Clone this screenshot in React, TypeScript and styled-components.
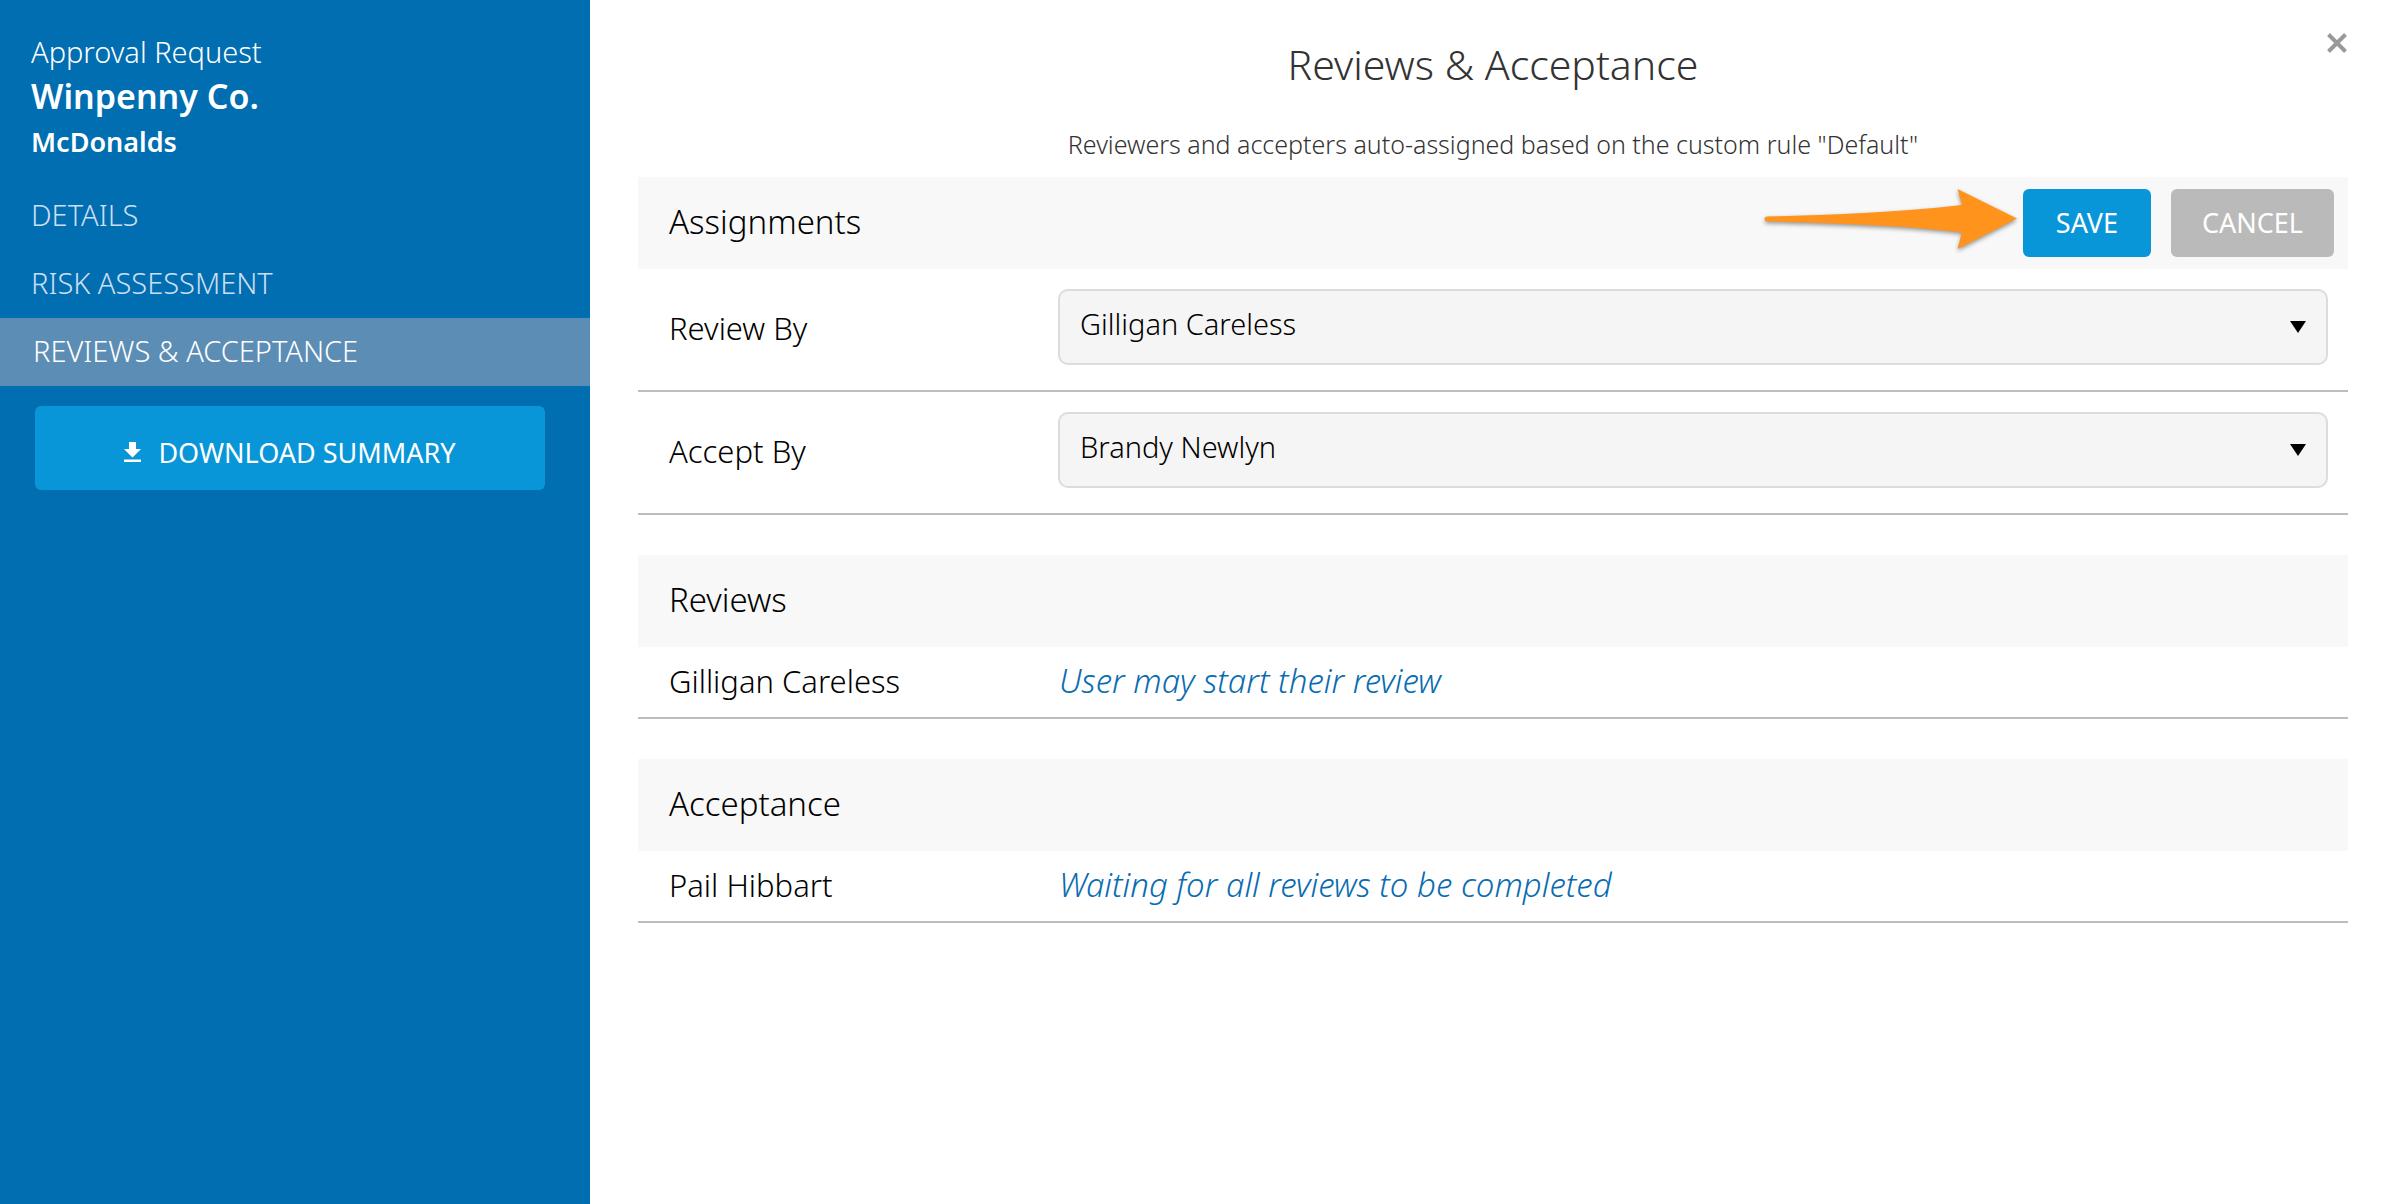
import React, { useState } from "react";
import styled, { createGlobalStyle } from "styled-components";

const GlobalStyle = createGlobalStyle`
  *, *::before, *::after { box-sizing: border-box; }
  body {
    margin: 0;
    background: #ffffff;
    color: #000000;
    font-family: "Noto Sans", "Open Sans", sans-serif;
    font-weight: 300;
  }
  h1, h2, p, dl, dt, dd { margin: 0; font-weight: inherit; }
  button, select { font-family: inherit; }
`;

const Page = styled.div`
  display: flex;
  min-height: 100vh;
`;

const Sidebar = styled.aside`
  flex: 0 0 590px;
  display: flex;
  flex-direction: column;
  background: #006eb1;
  color: #ffffff;
`;

const Request = styled.header`
  padding: 32px 31px 18px;
`;

const RequestKind = styled.p`
  font-size: 29px;
  line-height: 40px;
`;

const Company = styled.p`
  font-size: 34px;
  line-height: 48px;
  font-weight: 600;
`;

const Client = styled.p`
  font-size: 27px;
  line-height: 44px;
  font-weight: 600;
`;

const Nav = styled.nav`
  display: flex;
  flex-direction: column;
`;

const NavLink = styled.a<{ $active?: boolean }>`
  padding: 0 31px 2px;
  padding-left: ${(p) => (p.$active ? 33 : 31)}px;
  font-size: 29px;
  line-height: 66px;
  text-decoration: none;
  text-transform: uppercase;
  color: ${(p) => (p.$active ? "#ffffff" : "#ccdff0")};
  background: ${(p) => (p.$active ? "#5c8db5" : "transparent")};
`;

const Button = styled.button<{ $muted?: boolean }>`
  min-width: 128px;
  height: 68px;
  padding: 0 31px 2px;
  border: 0;
  border-radius: 6px;
  background: ${(p) => (p.$muted ? "#bababa" : "#0996d9")};
  color: #ffffff;
  font-size: 27px;
  font-weight: 400;
  text-transform: uppercase;
  cursor: pointer;
`;

const DownloadButton = styled(Button)`
  display: flex;
  align-items: center;
  justify-content: center;
  gap: 17px;
  height: 84px;
  margin: 20px 45px 0 35px;
  padding: 8px 0 0;
`;

const Main = styled.main`
  position: relative;
  flex: 1;
  min-width: 0;
  padding: 36px 34px 40px 48px;
`;

const CloseButton = styled.button`
  position: absolute;
  top: 29px;
  right: 31px;
  display: flex;
  padding: 4px;
  border: 0;
  background: none;
  cursor: pointer;
`;

const Title = styled.h1`
  font-size: 41px;
  line-height: 56px;
  text-align: center;
  color: #333333;
`;

const Subtitle = styled.p`
  margin: 32px 0 13px;
  font-size: 25px;
  line-height: 40px;
  text-align: center;
  color: #333333;
`;

const Section = styled.section`
  & + & { margin-top: 40px; }
`;

const SectionHeader = styled.div`
  display: flex;
  align-items: center;
  justify-content: space-between;
  height: 92px;
  padding: 0 14px 0 31px;
  background: #f8f8f8;
`;

const SectionTitle = styled.h2`
  padding-bottom: 2px;
  font-size: 33px;
  line-height: 44px;
`;

const Actions = styled.div`
  display: flex;
  align-items: center;
`;

const ButtonGroup = styled.div`
  display: flex;
  gap: 20px;
`;

const FieldRow = styled.div`
  display: grid;
  grid-template-columns: 420px 1fr;
  align-items: center;
  padding: 20px 20px 25px 0;
  border-bottom: 2px solid #bdbdbd;
`;

const FieldLabel = styled.label`
  padding: 2px 0 0 31px;
  font-size: 31px;
  line-height: 44px;
`;

const SelectBox = styled.div`
  display: grid;
  align-items: center;
  justify-items: end;

  & > * { grid-area: 1 / 1; }
  & > svg { margin-right: 22px; pointer-events: none; }
`;

const Select = styled.select`
  appearance: none;
  width: 100%;
  height: 76px;
  padding: 0 60px 8px 20px;
  border: 2px solid #dcdcdc;
  border-radius: 10px;
  background: #f5f5f5;
  color: #000000;
  font-size: 29px;
  font-weight: 300;
`;

const StatusRow = styled.dl`
  display: grid;
  grid-template-columns: 420px 1fr;
  align-items: center;
  height: 72px;
  padding-bottom: 2px;
  border-bottom: 2px solid #bdbdbd;
  font-size: 31px;
  line-height: 44px;
`;

const Person = styled.dt`
  padding-left: 31px;
`;

const Status = styled.dd`
  padding-left: 1px;
  font-size: 33px;
  font-style: italic;
  color: #0a6cb0;
`;

const DownloadIcon = () => (
  <svg width="17" height="20" viewBox="0 0 17 20" fill="#ffffff" aria-hidden="true">
    <path d="M5 0h7v7h5l-8.500 8.500L0 7h5z" />
    <path d="M0 17.500h17V20H0z" />
  </svg>
);

const CloseIcon = () => (
  <svg width="20" height="20" viewBox="0 0 20 20" stroke="#999999" strokeWidth="4" aria-hidden="true">
    <path d="M1.500 1.500l17 17M18.500 1.500l-17 17" />
  </svg>
);

const Caret = () => (
  <svg width="16" height="12" viewBox="0 0 16 12" aria-hidden="true">
    <path d="M0 0h16L8 12z" />
  </svg>
);

const ArrowDrawing = styled.svg`
  margin-right: 2px;
  filter: drop-shadow(0 2px 2px rgba(0, 0, 0, 0.4));
`;

const PointerArrow = () => (
  <ArrowDrawing width="260" height="68" viewBox="0 0 260 68" fill="#ff931c" aria-hidden="true">
    <path d="M6 27.500C70 26 140 23 201 16L196.500 0L256 29.500L196.500 60L201 43.500C150 37 70 34 6 32.500Q3.500 32.300 3.500 30Q3.500 27.600 6 27.500Z" />
  </ArrowDrawing>
);

const people = ["Gilligan Careless", "Brandy Newlyn", "Pail Hibbart"];

function AssigneeField({ id, label, initial }: { id: string; label: string; initial: string }) {
  const [value, setValue] = useState(initial);
  return (
    <FieldRow>
      <FieldLabel htmlFor={id}>{label}</FieldLabel>
      <SelectBox>
        <Select id={id} value={value} onChange={(e) => setValue(e.target.value)}>
          {people.map((name) => (
            <option key={name}>{name}</option>
          ))}
        </Select>
        <Caret />
      </SelectBox>
    </FieldRow>
  );
}

function StatusSection({ title, person, status }: { title: string; person: string; status: string }) {
  return (
    <Section>
      <SectionHeader>
        <SectionTitle>{title}</SectionTitle>
      </SectionHeader>
      <StatusRow>
        <Person>{person}</Person>
        <Status>{status}</Status>
      </StatusRow>
    </Section>
  );
}

export default function App() {
  return (
    <>
      <GlobalStyle />
      <Page>
        <Sidebar>
          <Request>
            <RequestKind>Approval Request</RequestKind>
            <Company>Winpenny Co.</Company>
            <Client>McDonalds</Client>
          </Request>
          <Nav>
            <NavLink href="#details">Details</NavLink>
            <NavLink href="#risk">Risk Assessment</NavLink>
            <NavLink href="#reviews" $active aria-current="page">
              Reviews &amp; Acceptance
            </NavLink>
          </Nav>
          <DownloadButton type="button">
            <DownloadIcon />
            Download Summary
          </DownloadButton>
        </Sidebar>
        <Main>
          <CloseButton type="button" aria-label="Close">
            <CloseIcon />
          </CloseButton>
          <Title>Reviews &amp; Acceptance</Title>
          <Subtitle>Reviewers and accepters auto-assigned based on the custom rule "Default"</Subtitle>
          <Section>
            <SectionHeader>
              <SectionTitle>Assignments</SectionTitle>
              <Actions>
                <PointerArrow />
                <ButtonGroup>
                  <Button type="button">Save</Button>
                  <Button type="button" $muted>
                    Cancel
                  </Button>
                </ButtonGroup>
              </Actions>
            </SectionHeader>
            <AssigneeField id="review-by" label="Review By" initial="Gilligan Careless" />
            <AssigneeField id="accept-by" label="Accept By" initial="Brandy Newlyn" />
          </Section>
          <StatusSection title="Reviews" person="Gilligan Careless" status="User may start their review" />
          <StatusSection
            title="Acceptance"
            person="Pail Hibbart"
            status="Waiting for all reviews to be completed"
          />
        </Main>
      </Page>
    </>
  );
}
